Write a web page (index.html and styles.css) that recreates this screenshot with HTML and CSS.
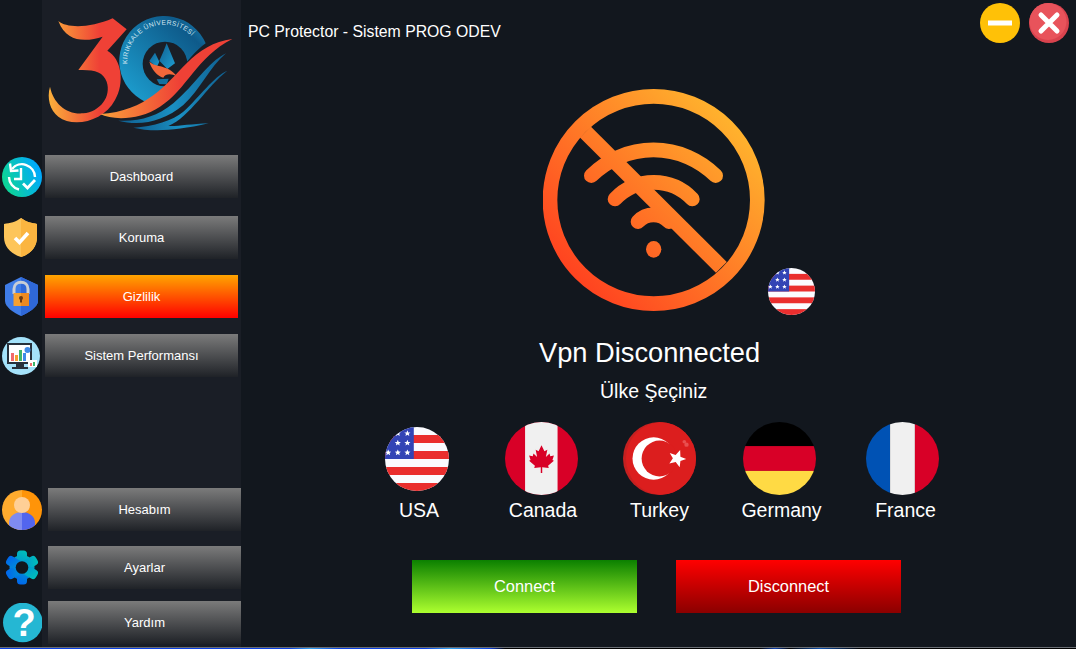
FILE: index.html
```html
<!DOCTYPE html>
<html lang="tr">
<head>
  <meta charset="UTF-8" />
  <title>PC Protector</title>
  <link rel="stylesheet" href="styles.css">
</head>
<body>

<svg class="defs" width="0" height="0">
  <defs>
    <polygon id="star" points="0,-5 1.4,-1.6 4.8,-1.5 2.2,0.6 3,4 0,2.1 -3,4 -2.2,0.6 -4.8,-1.5 -1.4,-1.6" fill="#fff"/>
    <symbol id="flagUs" viewBox="0 0 100 100">
      <rect width="100" height="100" fill="#fbfbff"/>
      <rect y="12.5" width="100" height="12.5" fill="#ea2e2e"/>
      <rect y="37.5" width="100" height="12.5" fill="#ea2e2e"/>
      <rect y="62.5" width="100" height="12.5" fill="#ea2e2e"/>
      <rect y="87.5" width="100" height="12.5" fill="#ea2e2e"/>
      <rect width="45" height="50" fill="#3344b5"/>
      <use href="#star" x="35" y="10"/>
      <use href="#star" x="20" y="25"/>
      <use href="#star" x="35" y="25"/>
      <use href="#star" x="5" y="40"/>
      <use href="#star" x="20" y="40"/>
      <use href="#star" x="35" y="40"/>
      <use href="#star" x="20" y="10"/>
    </symbol>
    <linearGradient id="threeGrad" x1="0" y1="0" x2="1" y2="0">
      <stop offset="0" stop-color="#fbb03b"/>
      <stop offset="0.65" stop-color="#ef4136"/>
    </linearGradient>
    <linearGradient id="waveGrad" x1="0" y1="0" x2="1" y2="0">
      <stop offset="0" stop-color="#f9a13a"/>
      <stop offset="0.6" stop-color="#ef4136"/>
    </linearGradient>
    <linearGradient id="ringGrad" x1="0" y1="1" x2="1" y2="0">
      <stop offset="0.1" stop-color="#1c9ccd"/>
      <stop offset="0.8" stop-color="#0e5a8a"/>
      <stop offset="1" stop-color="#1a8cc0"/>
    </linearGradient>
    <linearGradient id="blueWave" x1="0" y1="0" x2="1" y2="0">
      <stop offset="0" stop-color="#0f5f90"/>
      <stop offset="0.5" stop-color="#1a8fc2"/>
      <stop offset="1" stop-color="#0f5f90"/>
    </linearGradient>
    <linearGradient id="flameGrad" x1="0" y1="0" x2="1" y2="1">
      <stop offset="0" stop-color="#0f5f90"/>
      <stop offset="1" stop-color="#1f9fd2"/>
    </linearGradient>
    <linearGradient id="clockGrad" x1="0" y1="0.7" x2="1" y2="0.3">
      <stop offset="0.1" stop-color="#0dd39a"/>
      <stop offset="0.95" stop-color="#00a8ff"/>
    </linearGradient>
    <linearGradient id="gearGrad" gradientUnits="userSpaceOnUse" x1="10" y1="-17" x2="-6" y2="17">
      <stop offset="0" stop-color="#00c8b4"/>
      <stop offset="1" stop-color="#0062f0"/>
    </linearGradient>
    <linearGradient id="wifiFull" gradientUnits="userSpaceOnUse" x1="110" y1="620" x2="640" y2="100">
      <stop offset="0" stop-color="#ff3d1f"/>
      <stop offset="1" stop-color="#ffb92e"/>
    </linearGradient>
    <clipPath id="avatarClip"><circle cx="20" cy="20" r="20"/></clipPath>
    <path id="arcText" d="M382 192 A112 112 0 0 1 592 132"/>
  </defs>
</svg>

<div class="app">
  <aside class="sidebar">
    <svg class="logo" viewBox="126 0 597 450">
      <path d="M435 305 A135 135 0 1 1 617 130 C560 170 500 280 435 305Z" fill="url(#ringGrad)"/>
      <circle cx="495" cy="192" r="67" fill="#1a1e26"/>
      <text class="logo-text" fill="#d5e8f2" font-size="20"><textPath href="#arcText" textLength="272">KIRIKKALE ÜNİVERSİTESİ</textPath></text>
      <path d="M500 130 L525 190 L502 207 L478 182 L490 155Z" fill="url(#flameGrad)"/>
      <path d="M465 158 L478 185 L470 202 L448 183Z" fill="url(#flameGrad)"/>
      <path d="M470 238 L506 236 L500 253 L478 252Z" fill="#14709f"/>
      <path d="M448 185 C470 204 502 192 531 229 C512 220 497 221 490 233 C473 228 455 210 448 185Z" fill="#f2673a"/>
      <path d="M175 63 C200 85 270 85 338 55 L380 88 L322 152 C365 175 375 250 345 300 C310 365 220 385 175 350 C150 330 140 295 150 260 C160 310 200 345 250 340 C300 335 335 290 320 245 C310 215 280 208 235 210 L308 110 C260 125 200 130 175 63Z" fill="url(#threeGrad)"/>
      <path d="M697 117 C640 125 600 150 560 190 C500 250 440 335 300 342 C340 362 420 360 480 320 C560 270 590 170 697 117Z" fill="url(#waveGrad)"/>
      <path d="M678 160 C620 190 590 250 520 310 C470 350 420 365 355 362 C420 380 490 365 550 315 C600 270 630 200 678 160Z" fill="url(#blueWave)"/>
      <path d="M682 212 C640 230 600 290 550 335 C520 360 460 380 400 383 C450 395 520 395 626 370 C570 372 530 380 505 378 C570 350 620 260 682 212Z" fill="url(#blueWave)"/>
    </svg>

    <nav class="nav-group">
      <div class="nav-row">
        <svg class="nav-icon" viewBox="0 0 40 40">
          <circle cx="20" cy="20" r="20" fill="url(#clockGrad)"/>
          <path d="M10 12 A13 13 0 0 1 33 20" fill="none" stroke="#fff" stroke-width="2.4"/>
          <path d="M7 20 A13 13 0 0 0 17 32.500" fill="none" stroke="#fff" stroke-width="2.4"/>
          <path d="M8 6.500 L9 14 L16.500 13.500" fill="none" stroke="#fff" stroke-width="2.4"/>
          <path d="M19 11 V22 H12" fill="none" stroke="#fff" stroke-width="2.4"/>
          <path d="M21 26.500 L25.500 31 L33 23" fill="none" stroke="#fff" stroke-width="2.800"/>
        </svg>
        <button class="nav-btn">Dashboard</button>
      </div>
      <div class="nav-row nav-row-koruma">
        <svg class="nav-icon" viewBox="0 0 40 40">
          <path d="M19 0 C24 4 30 5 35 6 V19 C35 29 29 36 19 39 C9 36 2 29 2 19 V6 C8 5 14 4 19 0Z" fill="#fdc55a"/>
          <path d="M19 0 C24 4 30 5 35 6 V19 C35 29 29 36 19 39Z" fill="#fbb540"/>
          <path d="M13 20 L17.500 24.500 L26 15" fill="none" stroke="#fff" stroke-width="3.600"/>
        </svg>
        <button class="nav-btn">Koruma</button>
      </div>
      <div class="nav-row">
        <svg class="nav-icon" viewBox="0 0 40 40">
          <path d="M19 0 L36 8 V24 C36 30 26 36 19 39 C12 36 3 30 3 24 V8Z" fill="#3f7de8"/>
          <path d="M19 0 L36 8 V24 C36 30 26 36 19 39Z" fill="#2f68d8"/>
          <path d="M12 17 V12 C12 3 26 3 26 12 V17" fill="none" stroke="#c9ced6" stroke-width="3"/>
          <rect x="11.500" y="16" width="15.500" height="13" fill="#f5a030"/>
          <rect x="19" y="16" width="8" height="13" fill="#ec8a20"/>
          <circle cx="19" cy="21" r="2" fill="#6b3a12"/>
          <rect x="18" y="21" width="2" height="4.500" fill="#6b3a12"/>
        </svg>
        <button class="nav-btn nav-btn-active">Gizlilik</button>
      </div>
      <div class="nav-row">
        <svg class="nav-icon" viewBox="0 0 40 40">
          <circle cx="19" cy="20" r="19" fill="#a4e2fa"/>
          <rect x="5" y="7" width="25" height="21" fill="#27313c"/>
          <rect x="7" y="9" width="21" height="17" fill="#fff"/>
          <rect x="14" y="28" width="8" height="3" fill="#27313c"/>
          <rect x="10" y="31" width="16" height="2" fill="#27313c"/>
          <rect x="9" y="17" width="3" height="8" fill="#f26b6b"/>
          <rect x="13" y="19" width="3" height="6" fill="#f5a030"/>
          <rect x="17" y="14" width="3" height="11" fill="#3fb56b"/>
          <rect x="21" y="17" width="3" height="8" fill="#3f8be8"/>
          <circle cx="25.500" cy="14" r="3" fill="#3f8be8"/>
          <rect x="26" y="24" width="9" height="7" fill="#fff"/>
          <rect x="28" y="27" width="2" height="3" fill="#f26b6b"/>
          <rect x="31" y="26" width="2" height="4" fill="#3fb56b"/>
        </svg>
        <button class="nav-btn">Sistem Performansı</button>
      </div>
    </nav>

    <nav class="nav-group nav-bottom">
      <div class="nav-row">
        <svg class="nav-icon" viewBox="0 0 40 40">
          <g clip-path="url(#avatarClip)">
            <rect width="20" height="40" fill="#ffab2e"/>
            <rect x="20" width="20" height="40" fill="#ff9408"/>
            <path d="M7 40 V33 C7 26 13 22 20 22 V40Z" fill="#7f8bf0"/>
            <path d="M33 40 V33 C33 26 27 22 20 22 V40Z" fill="#5265ee"/>
            <circle cx="20" cy="15" r="8" fill="#ffcf96"/>
          </g>
        </svg>
        <button class="nav-btn">Hesabım</button>
      </div>
      <div class="nav-row">
        <svg class="nav-icon" viewBox="0 0 40 40">
          <g transform="translate(20 19.500)">
            <circle r="12.500" fill="url(#gearGrad)"/>
            <g fill="url(#gearGrad)">
              <rect x="-5" y="-17" width="10" height="34" rx="3.500"/>
              <rect x="-5" y="-17" width="10" height="34" rx="3.500" transform="rotate(60)"/>
              <rect x="-5" y="-17" width="10" height="34" rx="3.500" transform="rotate(120)"/>
            </g>
            <circle r="6.300" fill="#12171e"/>
          </g>
        </svg>
        <button class="nav-btn">Ayarlar</button>
      </div>
      <div class="nav-row nav-row-yardim">
        <svg class="nav-icon" viewBox="0 0 40 40">
          <circle cx="20.800" cy="19.500" r="19.800" fill="#25b7d3"/>
          <text class="help-mark" x="22" y="33" text-anchor="middle">?</text>
        </svg>
        <button class="nav-btn">Yardım</button>
      </div>
    </nav>
  </aside>

  <main class="main">
    <header class="topbar">
      <div class="app-title">PC Protector - Sistem PROG ODEV</div>
      <div class="win-btns">
        <svg class="win-btn" viewBox="0 0 40 40">
          <circle cx="20" cy="20" r="20" fill="#ffc107"/>
          <rect x="8" y="17.500" width="24" height="5" fill="#fff"/>
        </svg>
        <svg class="win-btn" viewBox="0 0 40 40">
          <circle cx="20" cy="20" r="20" fill="#d9434e"/>
          <circle cx="19" cy="18.500" r="18.500" fill="#e8535b"/>
          <path d="M12 12 L28 28 M28 12 L12 28" stroke="#fff" stroke-width="5" stroke-linecap="round"/>
        </svg>
      </div>
    </header>

    <div class="hero">
      <svg class="hero-icon" viewBox="40 27 666 666">
        <circle cx="372" cy="360" r="311" fill="none" stroke="url(#wifiFull)" stroke-width="44"/>
        <g fill="none" stroke="url(#wifiFull)" stroke-width="44" stroke-linecap="round">
          <path d="M185 287 A264 264 0 0 1 558 287"/>
          <path d="M256 357 A160 160 0 0 1 488 357"/>
          <path d="M325 425 A63 63 0 0 1 418 425"/>
        </g>
        <path d="M167 156 L575 562" fill="none" stroke="url(#wifiFull)" stroke-width="46"/>
        <ellipse cx="372" cy="508" rx="23" ry="25" fill="url(#wifiFull)"/>
      </svg>
      <svg class="hero-flag"><use href="#flagUs"/></svg>
    </div>

    <div class="vpn-title">Vpn Disconnected</div>
    <div class="vpn-sub">Ülke Şeçiniz</div>

    <div class="countries">
      <div class="country">
        <div class="flag-box"><svg class="flag flag-small"><use href="#flagUs"/></svg></div>
        <span>USA</span>
      </div>
      <div class="country">
        <div class="flag-box">
          <svg class="flag" viewBox="0 0 100 100">
            <rect width="100" height="100" fill="#d80027"/>
            <rect x="27.500" width="44.500" height="100" fill="#f0f0f0"/>
            <path d="M50 32 L54 40 L58 38 L56 48 L61 43 L62 47 L67 46 L65 52 L67 53 L59 60 L60 63 L51 62 L51 70 L49 70 L49 62 L40 63 L41 60 L33 53 L35 52 L33 46 L38 47 L39 43 L44 48 L42 38 L46 40Z" fill="#d80027"/>
          </svg>
        </div>
        <span>Canada</span>
      </div>
      <div class="country">
        <div class="flag-box">
          <svg class="flag" viewBox="0 0 100 100">
            <rect width="100" height="100" fill="#c52020"/>
            <circle cx="54" cy="50" r="50" fill="#dc1e1e"/>
            <circle cx="42" cy="50" r="29" fill="#fff"/>
            <circle cx="50" cy="50" r="24.500" fill="#dc1e1e"/>
            <polygon transform="translate(74 50) scale(2.500) rotate(20)" points="0,-5 1.400,-1.600 4.800,-1.500 2.200,0.600 3,4 0,2.100 -3,4 -2.200,0.600 -4.800,-1.500 -1.400,-1.600" fill="#fff"/>
            <circle cx="84" cy="27" r="2.500" fill="#e85050"/>
            <circle cx="87" cy="31" r="3" fill="#e85050"/>
          </svg>
        </div>
        <span class="label-centered">Turkey</span>
      </div>
      <div class="country">
        <div class="flag-box">
          <svg class="flag" viewBox="0 0 100 100">
            <rect width="100" height="33" fill="#000"/>
            <rect y="33" width="100" height="34" fill="#d80027"/>
            <rect y="67" width="100" height="33" fill="#ffda44"/>
          </svg>
        </div>
        <span>Germany</span>
      </div>
      <div class="country">
        <div class="flag-box">
          <svg class="flag" viewBox="0 0 100 100">
            <rect width="33" height="100" fill="#0052b4"/>
            <rect x="33" width="34" height="100" fill="#f0f0f0"/>
            <rect x="67" width="33" height="100" fill="#d80027"/>
          </svg>
        </div>
        <span class="label-wide">France</span>
      </div>
    </div>

    <div class="actions">
      <button class="action-btn action-connect">Connect</button>
      <button class="action-btn action-disconnect">Disconnect</button>
    </div>
  </main>
</div>
<div class="taskbar-edge"></div>

</body>
</html>
```

FILE: styles.css
```css
* { box-sizing: border-box; }
html, body {
  height: 100%;
}
body {
  margin: 0;
  overflow: hidden;
  font-family: 'Liberation Sans', Arial, sans-serif;
  background: #12171e;
  color: #fff;
}
.defs {
  display: block;
  height: 0;
}
.app {
  display: flex;
  height: 647px;
}
.sidebar {
  width: 241px;
  flex-shrink: 0;
  display: flex;
  flex-direction: column;
  padding-bottom: 3px;
  background: linear-gradient(to right, #12171e 42px, #1a1e26 42px);
}
.logo {
  display: block;
  width: 199px;
  height: 150px;
  margin-left: 42px;
  margin-bottom: 5px;
  flex-shrink: 0;
}
.logo-text {
  font-family: 'Liberation Sans', Arial, sans-serif;
}
.nav-group {
  display: flex;
  flex-direction: column;
  gap: 16px;
}
.nav-row {
  display: flex;
  align-items: center;
}
.nav-row-koruma {
  margin-top: 2px;
}
.nav-icon {
  width: 40px;
  height: 40px;
  margin-left: 2px;
  margin-right: 3px;
  flex-shrink: 0;
}
.nav-btn {
  width: 193px;
  height: 43px;
  border: none;
  padding: 0;
  color: #fff;
  font-family: inherit;
  font-size: 13px;
  background: linear-gradient(to bottom, #7b7b7b, #1f2227);
}
.nav-btn-active {
  background: linear-gradient(to bottom, #ffa500, #ff0000);
}
.nav-bottom {
  margin-top: auto;
  gap: 15px;
}
.nav-bottom .nav-icon {
  margin-right: 6px;
}
.nav-row-yardim {
  margin-top: -3px;
}
.help-mark {
  font-family: 'Liberation Sans', Arial, sans-serif;
  font-size: 38px;
  font-weight: bold;
  fill: #fff;
}
.main {
  flex: 1;
  min-width: 0;
}
.topbar {
  display: flex;
  justify-content: space-between;
  height: 46px;
  padding: 3px 7px 0 7px;
}
.app-title {
  margin-top: 18px;
  font-size: 15.8px;
  line-height: 22px;
}
.win-btns {
  display: flex;
  gap: 9px;
}
.win-btn {
  width: 40px;
  height: 40px;
}
.hero {
  position: relative;
  width: 222px;
  height: 222px;
  margin: 43px 0 0 302px;
}
.hero-icon {
  display: block;
  width: 222px;
  height: 222px;
}
.hero-flag {
  position: absolute;
  left: 225px;
  top: 179px;
  width: 47px;
  height: 47px;
  border-radius: 50%;
}
.vpn-title {
  margin: 26px 0 0 298px;
  font-size: 27.25px;
  line-height: 32px;
}
.vpn-sub {
  margin: 10px 0 0 359px;
  font-size: 19.5px;
  line-height: 24px;
}
.countries {
  display: grid;
  grid-template-columns: 124px 124px 113px 127px 119px;
  margin: 19px 0 0 114px;
}
.country {
  display: flex;
  flex-direction: column;
  align-items: center;
  gap: 3px;
  font-size: 19.5px;
  line-height: 24px;
}
.country span {
  margin-left: 4px;
}
.country .label-centered {
  margin-left: 0;
}
.country .label-wide {
  margin-left: 6px;
}
.flag-box {
  display: flex;
  align-items: center;
  justify-content: center;
  height: 73px;
}
.flag {
  width: 73px;
  height: 73px;
  border-radius: 50%;
}
.flag-small {
  width: 64px;
  height: 64px;
}
.actions {
  display: flex;
  gap: 39px;
  margin: 38px 0 0 171px;
}
.action-btn {
  width: 225px;
  height: 53px;
  border: none;
  padding: 0;
  color: #fff;
  font-family: inherit;
  font-size: 16.4px;
}
.action-connect {
  background: linear-gradient(to bottom, #0b8000, #adff2f);
}
.action-disconnect {
  background: linear-gradient(to bottom, #ff0000, #8b0000);
}
.taskbar-edge {
  height: 2px;
  border-top: 1px solid #6b6f75;
  background: linear-gradient(to right, #0a3fe0 0, #0a3fe0 290px, #2fa0f0 310px, #0a3fe0 340px, #0a3fe0 425px, #2fa0f0 450px, #0a3fe0 490px, #000 505px, #000 760px, #0b3fb0 775px, #000 790px, #0b4fb0 820px, #000 860px);
}
```
